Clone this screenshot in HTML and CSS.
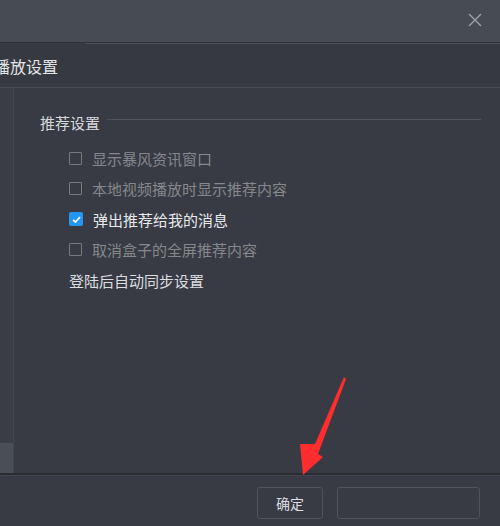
FILE: index.html
```html
<!DOCTYPE html>
<html lang="zh">
<head>
<meta charset="utf-8">
<link rel="stylesheet" href="styles.css">
</head>
<body>
<div class="window">
  <div class="titlebar">
    <svg class="close" width="14" height="14" viewBox="0 0 14 14"><path d="M1 1 L13 13 M13 1 L1 13" stroke="#9ea1a7" stroke-width="1.4" fill="none"/></svg>
  </div>
  <div class="tabline"></div>
  <div class="header"><span class="header-title">播放设置</span></div>
  <div class="main">
    <div class="sidebar">
      <div class="sidebar-fill"></div>
      <div class="sidebar-active"></div>
    </div>
    <div class="content">
      <div class="section-title">
        <span>推荐设置</span>
        <div class="section-line"></div>
      </div>
      <div class="options">
        <div class="option disabled"><span class="cb"></span><span>显示暴风资讯窗口</span></div>
        <div class="option disabled"><span class="cb"></span><span>本地视频播放时显示推荐内容</span></div>
        <div class="option checked"><span class="cb on"><svg width="13" height="13" viewBox="0 0 13 13"><path d="M3 6.8 L5.4 9 L10 4" stroke="#fff" stroke-width="1.8" fill="none"/></svg></span><span>弹出推荐给我的消息</span></div>
        <div class="option disabled"><span class="cb"></span><span>取消盒子的全屏推荐内容</span></div>
        <div class="option plain"><span>登陆后自动同步设置</span></div>
      </div>
    </div>
  </div>
  <div class="footer">
    <button class="btn btn-ok">确定</button>
    <button class="btn btn-empty"></button>
  </div>
  <svg class="arrow" width="500" height="526" viewBox="0 0 500 526">
    <polygon points="344,377 315,444 300,444 303,475 323,457 318,454 346,379" fill="#ff2d2d"/>
  </svg>
</div>
</body>
</html>
```

FILE: styles.css
```css
html, body {
  margin: 0;
  padding: 0;
}
body {
  width: 500px;
  height: 526px;
  overflow: hidden;
  background: #383b43;
  font-family: "Noto Sans CJK SC", "Noto Sans", sans-serif;
}
.window {
  position: relative;
  width: 500px;
  height: 526px;
  display: flex;
  flex-direction: column;
}
.titlebar {
  height: 42px;
  flex: none;
  background: #474b54;
  border-bottom: 1px solid #2d2f35;
  display: flex;
  justify-content: flex-end;
  align-items: flex-start;
}
.close {
  margin-top: 13px;
  margin-right: 18px;
}
.tabline {
  height: 1px;
  flex: none;
  margin-left: 86px;
  background: #4f525a;
}
.header {
  height: 43px;
  flex: none;
  background: #363940;
  border-bottom: 1px solid #4a4d55;
  display: flex;
  align-items: center;
  overflow: hidden;
}
.header-title {
  margin-left: -6px;
  font-size: 16px;
  color: #e4e5e8;
  white-space: nowrap;
  line-height: 20px;
}
.main {
  flex: 1;
  display: flex;
  min-height: 0;
}
.sidebar {
  width: 13px;
  flex: none;
  display: flex;
  flex-direction: column;
  border-right: 1px solid #43464d;
}
.sidebar-fill {
  flex: 1;
  background: #3a3d45;
}
.sidebar-active {
  height: 30px;
  background: #4a4e57;
}
.content {
  flex: 1;
  padding: 24px 19px 0 26px;
}
.section-title {
  display: flex;
  align-items: center;
  height: 20px;
  font-size: 15px;
  color: #d6d8dc;
}
.section-line {
  flex: 1;
  height: 1px;
  margin-left: 7px;
  margin-top: -5px;
  background: #50535b;
}
.options {
  margin-top: 11px;
  padding-left: 29px;
}
.option {
  height: 30.5px;
  display: flex;
  align-items: center;
  font-size: 15px;
  white-space: nowrap;
}
.option.disabled {
  color: #85878c;
}
.option.checked {
  color: #e8e9ec;
}
.option.plain {
  color: #dcdde0;
}
.cb {
  width: 11px;
  height: 11px;
  border: 1.5px solid #77797e;
  border-radius: 1px;
  margin-right: 10px;
  flex: none;
  display: flex;
}
.cb.on {
  width: 14px;
  height: 14px;
  border: none;
  background: #2196f3;
  border-radius: 2px;
  margin-right: 10px;
  align-items: center;
  justify-content: center;
}
.footer {
  height: 50px;
  flex: none;
  border-top: 2px solid #2a2c31;
  background: #383b43;
  display: flex;
  align-items: flex-start;
  padding-top: 12px;
  box-sizing: border-box;
  height: 53px;
  box-shadow: inset 0 1px 0 #43464d;
}
.btn {
  height: 32px;
  box-sizing: border-box;
  border: 1px solid #50535a;
  border-radius: 3px;
  background: #383b43;
  color: #dcdde0;
  font-family: "Noto Sans CJK SC", "Noto Sans", sans-serif;
  font-size: 14px;
  padding: 0;
}
.btn-ok {
  width: 66px;
  margin-left: 257px;
}
.btn-empty {
  width: 143px;
  margin-left: 14px;
}
.arrow {
  position: absolute;
  left: 0;
  top: 0;
  pointer-events: none;
}
```
